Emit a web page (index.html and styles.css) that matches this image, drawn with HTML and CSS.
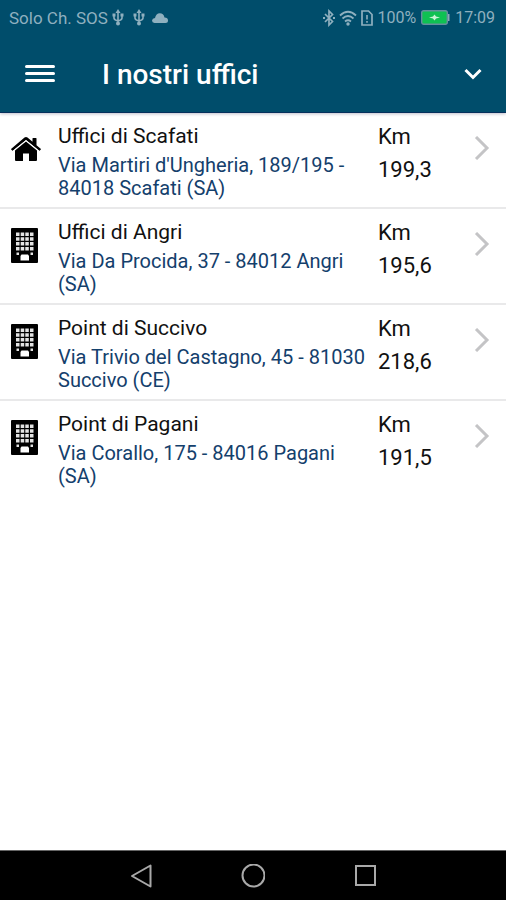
FILE: index.html
```html
<!DOCTYPE html>
<html lang="it">
<head>
<meta charset="utf-8">
<meta name="viewport" content="width=device-width, initial-scale=1">
<title>I nostri uffici</title>
<link rel="stylesheet" href="styles.css">
</head>
<body>
<svg class="defs" aria-hidden="true">
  <symbol id="building" viewBox="0 0 27 35">
    <path fill="#000" d="M1 0H26Q27 0 27 1V34Q27 35 26 35H1Q0 35 0 34V1Q0 0 1 0Z"/>
    <path fill="#e4e4e4" d="M5 4.500h3.500v3.500H5zM9.700 4.500h3.500v3.500H9.700zM14.300 4.500h3.500v3.500h-3.500zM19 4.500h3.500v3.500H19zM5 9.300h3.500v3.500H5zM9.700 9.300h3.500v3.500H9.700zM14.300 9.300h3.500v3.500h-3.500zM19 9.300h3.500v3.500H19zM5 14.100h3.500v3.500H5zM9.700 14.100h3.500v3.500H9.700zM14.300 14.100h3.500v3.500h-3.500zM19 14.100h3.500v3.500H19zM5 18.900h3.500v3.500H5zM9.700 18.900h3.500v3.500H9.700zM14.300 18.900h3.500v3.500h-3.500zM19 18.900h3.500v3.500H19zM5.500 24.500h2.500v2.500H5.500zM19.500 24.500h2.500v2.500h-2.500z"/>
    <path fill="#fff" d="M10.500 26.500h6.500l1 1.500v4.500H9.500V28z"/>
  </symbol>
  <symbol id="home" viewBox="0 0 30 24">
    <path d="M15 4.500 26 13.500V23Q26 24 25 24H18V16.500H12V24H5Q4 24 4 23V13.500Z"/>
    <path d="M15 0Q15.800 0 16.500 .6L21.500 4.800V1.500Q21.500 1 22 1H25Q25.500 1 25.500 1.500V8.200L29.700 11.700Q30.100 12.100 29.800 12.500L28.800 13.600Q28.400 14 28 13.600L15 3 2 13.600Q1.600 14 1.200 13.600L.2 12.500Q-.1 12.100 .3 11.700L13.500 .6Q14.200 0 15 0Z"/>
    <path d="M1.800 14.200 15 3.500 28.200 14.200" fill="none" stroke="#fff" stroke-width=".8"/>
  </symbol>
  <symbol id="chevron" viewBox="0 0 16 24">
    <path d="M2 1 13 12 2 23" fill="none" stroke="#c4c4c6" stroke-width="3"/>
  </symbol>
  <symbol id="usb" viewBox="0 0 12 17">
    <path d="M6 2V15M2 6V9Q2 11 6 12Q10 11 10 9V6" fill="none" stroke="currentColor" stroke-width="1.600"/>
    <path d="M6 0 8.500 4H3.500ZM.5 4.500h3v3h-3zM8.500 4.500h3v3h-3z" fill="currentColor"/>
    <circle cx="6" cy="14.500" r="2" fill="currentColor"/>
  </symbol>
</svg>

<header class="top">
  <div class="status">
    <div class="status-left">
      <span>Solo Ch. SOS</span>
      <svg class="usb" aria-hidden="true"><use href="#usb"/></svg>
      <svg class="usb usb-second" aria-hidden="true"><use href="#usb"/></svg>
      <svg class="cloud" viewBox="0 0 16 10" aria-hidden="true"><path fill="currentColor" d="M2.500 10Q0 9.500 0 7.500 .3 5 3 5 4 .5 7.800 .3 11.500 .3 12.500 4.500 16 4.500 16 7.500 16 10 13.500 10Z"/></svg>
    </div>
    <div class="status-right">
      <svg class="bluetooth" viewBox="0 0 12 18" aria-hidden="true"><path d="M2 5 9.500 12.500 6 16V2L9.500 5.500 2 13" fill="none" stroke="currentColor" stroke-width="1.700"/><path d="M0 8h2v2H0zM10 8h2v2h-2z" fill="currentColor"/></svg>
      <svg class="wifi" viewBox="0 0 18 16" aria-hidden="true"><path d="M1 5.500Q9-2 17 5.500M3.500 8.500Q9 3.500 14.500 8.500M6 11.500Q9 9 12 11.500" fill="none" stroke="currentColor" stroke-width="1.800"/><circle cx="9" cy="14" r="1.700" fill="currentColor"/></svg>
      <svg class="sim" viewBox="0 0 12 16" aria-hidden="true"><path d="M1 1H7.500L11 4.500V15H1Z" fill="none" stroke="currentColor" stroke-width="1.700"/><path d="M5.200 5h1.600v4.500H5.200zM5.200 11h1.600v1.800H5.200z" fill="currentColor"/></svg>
      <span>100%</span>
      <svg class="battery" viewBox="0 0 29 15" aria-hidden="true"><rect x=".7" y=".7" width="25.600" height="13.600" rx="2" fill="#0fc152" stroke="#668f9d" stroke-width="1.400"/><path fill="#8ca9b5" d="M27 4h1.500v7H27z"/><path fill="#c8f5d6" d="M8 7.500 12 6.500 13.500 4.500 15 6.500 19 7.500 15 8.500 13.500 10.500 12 8.500Z"/></svg>
      <span>17:09</span>
    </div>
  </div>
  <div class="appbar">
    <button class="icon-button" type="button" aria-label="Menu"><svg class="menu" viewBox="0 0 30 20" aria-hidden="true"><path d="M1.500 2.500h27M1.500 9.500h27M1.500 16.500h27" stroke="#fff" stroke-width="3" stroke-linecap="round"/></svg></button>
    <h1>I nostri uffici</h1>
    <button class="icon-button" type="button" aria-label="Espandi"><svg class="expand" viewBox="0 0 18 12" aria-hidden="true"><path d="M1.500 2 9 9.500 16.500 2" fill="none" stroke="#fff" stroke-width="3"/></svg></button>
  </div>
</header>

<main>
  <ul class="offices">
    <li><a class="office" href="#scafati">
      <svg class="home" aria-hidden="true"><use href="#home"/></svg>
      <div class="info"><h2>Uffici di Scafati</h2><p>Via Martiri d'Ungheria, 189/195 - 84018 Scafati (SA)</p></div>
      <div class="distance"><span>Km</span><span>199,3</span></div>
      <svg class="chevron" aria-hidden="true"><use href="#chevron"/></svg>
    </a></li>
    <li><a class="office" href="#angri">
      <svg class="building" aria-hidden="true"><use href="#building"/></svg>
      <div class="info"><h2>Uffici di Angri</h2><p>Via Da Procida, 37 - 84012 Angri (SA)</p></div>
      <div class="distance"><span>Km</span><span>195,6</span></div>
      <svg class="chevron" aria-hidden="true"><use href="#chevron"/></svg>
    </a></li>
    <li><a class="office" href="#succivo">
      <svg class="building" aria-hidden="true"><use href="#building"/></svg>
      <div class="info"><h2>Point di Succivo</h2><p>Via Trivio del Castagno, 45 - 81030 Succivo (CE)</p></div>
      <div class="distance"><span>Km</span><span>218,6</span></div>
      <svg class="chevron" aria-hidden="true"><use href="#chevron"/></svg>
    </a></li>
    <li><a class="office" href="#pagani">
      <svg class="building" aria-hidden="true"><use href="#building"/></svg>
      <div class="info"><h2>Point di Pagani</h2><p>Via Corallo, 175 - 84016 Pagani (SA)</p></div>
      <div class="distance"><span>Km</span><span>191,5</span></div>
      <svg class="chevron" aria-hidden="true"><use href="#chevron"/></svg>
    </a></li>
  </ul>
</main>

<nav class="system">
  <button type="button" aria-label="Indietro"><svg viewBox="0 0 24 24" aria-hidden="true"><path d="M21.500 1.500V22.500L3 12Z" stroke-linejoin="round"/></svg></button>
  <button type="button" aria-label="Home"><svg viewBox="0 0 24 24" aria-hidden="true"><circle cx="12.500" cy="11.500" r="11"/></svg></button>
  <button type="button" aria-label="Recenti"><svg viewBox="0 0 24 24" aria-hidden="true"><rect x="3" y="2" width="19" height="19"/></svg></button>
</nav>
</body>
</html>
```
FILE: styles.css
```css
* {
  box-sizing: border-box;
}

body {
  margin: 0;
  min-height: 100vh;
  display: flex;
  flex-direction: column;
  background: #fff;
  color: #111;
  font-family: Roboto, "Liberation Sans", sans-serif;
}

h1, h2, p, ul {
  margin: 0;
  padding: 0;
  font-weight: 400;
}

svg {
  display: block;
  flex: none;
}

button {
  border: 0;
  padding: 0;
  background: none;
}

.defs {
  position: absolute;
  width: 0;
  height: 0;
}

.top {
  background: #004d6b;
  border-bottom: 1px solid #06305c;
  box-shadow: 0 1px 3px #00003040;
}

.status {
  display: flex;
  justify-content: space-between;
  height: 35px;
  padding: 0 11px 0 9px;
  color: #8fb0bf;
  font-size: 17px;
}

.status-left,
.status-right {
  display: flex;
  align-items: center;
}

.status-right {
  gap: 4px;
  font-size: 16px;
}

.usb {
  width: 12px;
  height: 17px;
  margin-left: 4px;
}

.usb-second {
  margin-left: 9px;
}

.cloud {
  width: 16px;
  height: 10px;
  margin-left: 7px;
}

.bluetooth {
  width: 12px;
  height: 18px;
}

.wifi {
  width: 18px;
  height: 16px;
}

.sim {
  width: 12px;
  height: 16px;
}

.battery {
  width: 29px;
  height: 15px;
  margin: 0 1px;
}

.appbar {
  display: flex;
  align-items: center;
  height: 77px;
  padding: 0 24px 0 25px;
}

.appbar h1 {
  flex: 1;
  margin-left: 47px;
  padding-top: 2px;
  color: #fff;
  font-size: 28px;
  font-weight: 500;
}

.menu {
  width: 30px;
  height: 20px;
}

.expand {
  width: 18px;
  height: 12px;
}

main {
  flex: 1;
}

.offices {
  list-style: none;
}

.offices li {
  border-bottom: 2px solid #e9e9ea;
}

.offices li:last-child {
  border-bottom: 0;
}

.office {
  display: grid;
  grid-template-columns: 47px minmax(0, 1fr) 96px 16px;
  padding: 7px 16px 7px 11px;
  color: inherit;
  text-decoration: none;
}

.info {
  padding: 3px 8px 0 0;
}

.info h2 {
  font-size: 21px;
  line-height: 26px;
}

.info p {
  margin-top: 5px;
  color: #14406c;
  font-size: 20px;
  line-height: 23px;
}

.distance {
  display: flex;
  flex-direction: column;
  font-size: 22px;
  line-height: 33px;
}

.home {
  width: 30px;
  height: 24px;
  margin-top: 17px;
}

.building {
  width: 27px;
  height: 35px;
  margin-top: 12px;
}

.chevron {
  width: 16px;
  height: 24px;
  margin-top: 16px;
}

.system {
  display: flex;
  justify-content: center;
  gap: 88px;
  padding: 13px 0 12px;
  background: #000;
  border-top: 1px solid #666;
}

.system svg {
  width: 24px;
  height: 24px;
  fill: none;
  stroke: #a9a9a9;
  stroke-width: 2;
}
```
